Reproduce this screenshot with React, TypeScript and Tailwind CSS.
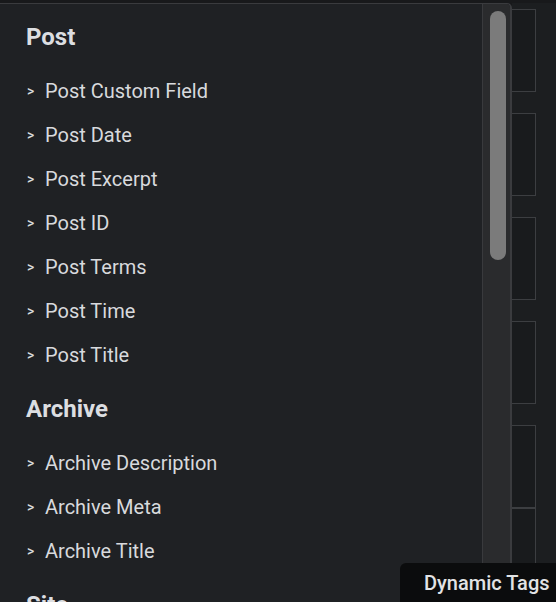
import React from 'react';

const SECTIONS = [
  {
    title: 'Post',
    items: ['Post Custom Field', 'Post Date', 'Post Excerpt', 'Post ID', 'Post Terms', 'Post Time', 'Post Title'],
  },
  {
    title: 'Archive',
    items: ['Archive Description', 'Archive Meta', 'Archive Title'],
  },
  {
    title: 'Site',
    items: ['Site Logo', 'Site Title'],
  },
];

// gaps above each control box on the right
const BOX_GAPS = ['mt-[6px]', 'mt-[21px]', 'mt-[21px]', 'mt-[21px]', 'mt-[21px]', 'mt-0'];

export default function App() {
  return (
    <div
      className="relative flex h-[602px] w-[556px] flex-col overflow-hidden bg-[#18191b]"
      style={{ fontFamily: 'Roboto, "Noto Sans", sans-serif' }}
    >
      <div className="h-[3px] shrink-0" />
      <div className="flex min-h-0 flex-1">
        {/* popup panel */}
        <div className="flex w-[512px] shrink-0 overflow-hidden rounded-tr-[5px] border-t border-r-2 border-[#3a3b3e] bg-[#1f2124]">
          <div className="flex-1 pl-[26px] pt-[1px]">
            {SECTIONS.map((s) => (
              <section key={s.title} className="pt-[10px]">
                <h3 className="flex h-11 items-center text-[24px] font-bold text-[#dcdee1]">{s.title}</h3>
                <ul className="mt-[10px]">
                  {s.items.map((item) => (
                    <li key={item} className="flex h-11 items-center text-[20px] text-[#d8dadd]">
                      <span className="w-[19px] pl-[1px] text-[14px] font-medium">&gt;</span>
                      <span>{item}</span>
                    </li>
                  ))}
                </ul>
              </section>
            ))}
          </div>
          {/* scrollbar */}
          <div className="w-[28px] shrink-0 border-l border-[#393a3d] bg-[#2a2b2d] px-[7px] pt-[7px]">
            <div className="h-[249px] w-[16px] rounded-full bg-[#7b7b7b]" />
          </div>
        </div>

        {/* controls behind the popup */}
        <div className="flex flex-1 flex-col bg-[#1c1e20]">
          {BOX_GAPS.map((g, i) => (
            <div
              key={i}
              className={`${g} h-[83px] w-[24px] shrink-0 border border-l-0 border-[#3c3e41] bg-[#191b1d]`}
            />
          ))}
        </div>
      </div>

      {/* tooltip */}
      <div className="absolute right-0 bottom-0 flex h-[39px] w-[156px] items-center overflow-hidden whitespace-nowrap rounded-tl-[6px] bg-[#0b0c0d] pl-[24px] text-[20px] font-medium text-[#e2e3e5]">
        Dynamic Tags
      </div>
    </div>
  );
}
